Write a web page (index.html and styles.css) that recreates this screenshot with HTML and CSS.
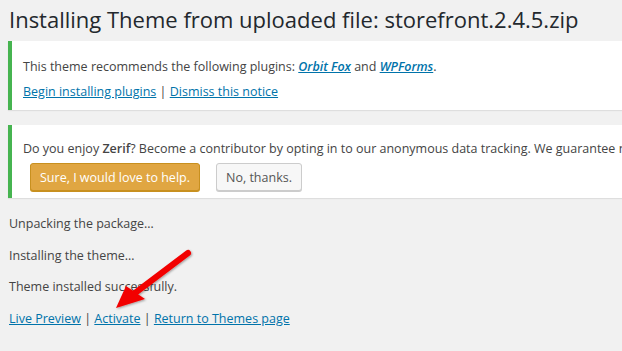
FILE: index.html
```html
<!DOCTYPE html>
<html lang="en">
<head>
    <meta charset="UTF-8">
    <title>Install Themes</title>
    <link rel="stylesheet" href="styles.css">
</head>
<body>
    <div class="wrap">
        <h1>Installing Theme from uploaded file: storefront.2.4.5.zip</h1>

        <div class="notice">
            <p>This theme recommends the following plugins: <a href="#" class="plugin">Orbit Fox</a> and <a href="#" class="plugin">WPForms</a>.</p>
            <p><a href="#">Begin installing plugins</a> | <a href="#">Dismiss this notice</a></p>
        </div>

        <div class="notice tracking">
            <p>Do you enjoy <b>Zerif</b>? Become a contributor by opting in to our anonymous data tracking. We guarantee no sensitive data is collected.</p>
            <div class="actions">
                <button class="btn primary">Sure, I would love to help.</button>
                <button class="btn">No, thanks.</button>
            </div>
        </div>

        <div class="log">
            <p>Unpacking the package&hellip;</p>
            <p>Installing the theme&hellip;</p>
            <p>Theme installed successfully.</p>
            <p class="links"><a href="#">Live Preview</a> | <a href="#">Activate</a> | <a href="#">Return to Themes page</a></p>
        </div>
    </div>

    <svg class="arrow" width="120" height="90" viewBox="0 0 120 90">
        <defs>
            <filter id="shadow" x="-20%" y="-20%" width="140%" height="140%">
                <feDropShadow dx="1" dy="1" stdDeviation="1" flood-color="#000" flood-opacity="0.35"/>
            </filter>
        </defs>
        <g filter="url(#shadow)">
            <line x1="98" y1="12" x2="45" y2="52" stroke="#f20000" stroke-width="6" stroke-linecap="round"/>
            <polygon points="26,67 36,45 55,58" fill="#f20000"/>
        </g>
    </svg>
</body>
</html>
```

FILE: styles.css
```css
body {
    margin: 0;
    background: #f1f1f1;
    color: #444;
    font-family: "Open Sans", "Noto Sans", sans-serif;
    font-size: 12.5px;
    line-height: 1.4;
    overflow: hidden;
}
.wrap {
    width: 800px;
    padding: 0 0 0 8px;
}
h1 {
    margin: 0;
    padding: 5px 0 6px 1px;
    font-size: 22px;
    font-weight: 400;
    line-height: 1.35;
    color: #23282d;
}
a {
    color: #0073aa;
}
.notice {
    background: #fff;
    border-left: 4px solid #46b450;
    box-shadow: 0 1px 1px rgba(0, 0, 0, 0.08);
    padding: 9px 12px 1px 11px;
    margin-bottom: 15px;
}
.notice p {
    margin: 8px 0;
}
.notice a.plugin {
    font-style: italic;
    font-weight: 600;
}
.tracking {
    padding: 8px 12px 7px 11px;
}
.tracking p {
    margin: 7px 0 6px;
    white-space: nowrap;
}
.tracking b {
    font-weight: 600;
}
.actions {
    display: flex;
    gap: 16px;
    padding-left: 7px;
}
.btn {
    font-family: inherit;
    font-size: 12.5px;
    height: 28px;
    padding: 0 9px;
    border: 1px solid #ccc;
    border-radius: 3px;
    background: #f7f7f7;
    color: #555;
    box-shadow: 0 1px 0 #ccc;
}
.btn.primary {
    background: #e0a642;
    border-color: #c8901f;
    color: #fff;
    box-shadow: 0 1px 0 #c8901f;
}
.log {
    padding-left: 1px;
}
.log p {
    margin: 0 0 12.5px;
    line-height: 19px;
}
.log p:first-child {
    margin-top: 16px;
}
.arrow {
    position: absolute;
    left: 90px;
    top: 241px;
}
```
